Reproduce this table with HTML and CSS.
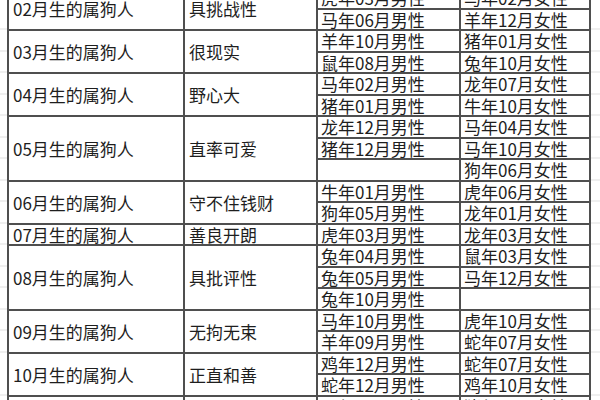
FILE: index.html
```html
<!DOCTYPE html>
<html lang="zh">
<head>
<meta charset="utf-8">
<title>属狗人</title>
<link rel="stylesheet" href="styles.css">
</head>
<body>
<table class="sheet">
  <colgroup><col class="c-month"><col class="c-trait"><col class="c-male"><col class="c-female"></colgroup>
  <tbody>
    <tr class="grp"><td rowspan="2" class="month">02月生的属狗人</td><td rowspan="2" class="trait">具挑战性</td><td class="m">虎年03月男性</td><td class="f">马年02月女性</td></tr>
    <tr class="sub"><td class="m">马年06月男性</td><td class="f">羊年12月女性</td></tr>

    <tr class="grp"><td rowspan="2" class="month">03月生的属狗人</td><td rowspan="2" class="trait">很现实</td><td class="m">羊年10月男性</td><td class="f">猪年01月女性</td></tr>
    <tr class="sub"><td class="m">鼠年08月男性</td><td class="f">兔年10月女性</td></tr>

    <tr class="grp"><td rowspan="2" class="month">04月生的属狗人</td><td rowspan="2" class="trait">野心大</td><td class="m">马年02月男性</td><td class="f">龙年07月女性</td></tr>
    <tr class="sub"><td class="m">猪年01月男性</td><td class="f">牛年10月女性</td></tr>

    <tr class="grp"><td rowspan="3" class="month">05月生的属狗人</td><td rowspan="3" class="trait">直率可爱</td><td class="m">龙年12月男性</td><td class="f">马年04月女性</td></tr>
    <tr class="sub"><td class="m">猪年12月男性</td><td class="f">马年10月女性</td></tr>
    <tr class="sub"><td class="m"></td><td class="f">狗年06月女性</td></tr>

    <tr class="grp"><td rowspan="2" class="month">06月生的属狗人</td><td rowspan="2" class="trait">守不住钱财</td><td class="m">牛年01月男性</td><td class="f">虎年06月女性</td></tr>
    <tr class="sub"><td class="m">狗年05月男性</td><td class="f">龙年01月女性</td></tr>

    <tr class="grp"><td class="month">07月生的属狗人</td><td class="trait">善良开朗</td><td class="m">虎年03月男性</td><td class="f">龙年03月女性</td></tr>

    <tr class="grp"><td rowspan="3" class="month">08月生的属狗人</td><td rowspan="3" class="trait">具批评性</td><td class="m">兔年04月男性</td><td class="f">鼠年03月女性</td></tr>
    <tr class="sub"><td class="m">兔年05月男性</td><td class="f">马年12月女性</td></tr>
    <tr class="sub"><td class="m">兔年10月男性</td><td class="f"></td></tr>

    <tr class="grp"><td rowspan="2" class="month">09月生的属狗人</td><td rowspan="2" class="trait">无拘无束</td><td class="m">马年10月男性</td><td class="f">虎年10月女性</td></tr>
    <tr class="sub"><td class="m">羊年09月男性</td><td class="f">蛇年07月女性</td></tr>

    <tr class="grp"><td rowspan="2" class="month">10月生的属狗人</td><td rowspan="2" class="trait">正直和善</td><td class="m">鸡年12月男性</td><td class="f">蛇年07月女性</td></tr>
    <tr class="sub"><td class="m">蛇年12月男性</td><td class="f">鸡年10月女性</td></tr>

    <tr class="grp"><td rowspan="2" class="month">11月生的属狗人</td><td rowspan="2" class="trait">聪明伶俐</td><td class="m">马年05月男性</td><td class="f">猪年04月女性</td></tr>
    <tr class="sub"><td class="m">羊年11月男性</td><td class="f">兔年08月女性</td></tr>
  </tbody>
</table>
</body>
</html>
```

FILE: styles.css
```css
html, body {
  margin: 0;
  padding: 0;
}

body {
  width: 600px;
  height: 400px;
  overflow: hidden;
  background-color: #ffffff;
  background-image: repeating-linear-gradient(to bottom, transparent 0, transparent 20.5px, #dedede 20.5px, #dedede 21.5px);
  background-position: 0 8.5px;
  font-family: "Noto Sans CJK SC", "Noto Sans", sans-serif;
}

.sheet {
  border-collapse: collapse;
  table-layout: fixed;
  width: 582px;
  margin: -14px 0 0 7px;
  background: #ffffff;
}

.c-month { width: 176px; }
.c-trait { width: 133px; }
.c-male { width: 143px; }
.c-female { width: 130px; }

.sheet tr {
  height: 21.5px;
}

.sheet td {
  padding: 0 0 0 4px;
  line-height: 19px;
  font-size: 17px;
  color: #1e1e1e;
  white-space: nowrap;
  overflow: hidden;
  vertical-align: middle;
  border: 2px solid #4f4f4f;
}

.sheet td.m,
.sheet td.f {
  padding-left: 3px;
}

.sheet tr.sub td {
  border-top: 1px solid #d9d9d9;
}
```
